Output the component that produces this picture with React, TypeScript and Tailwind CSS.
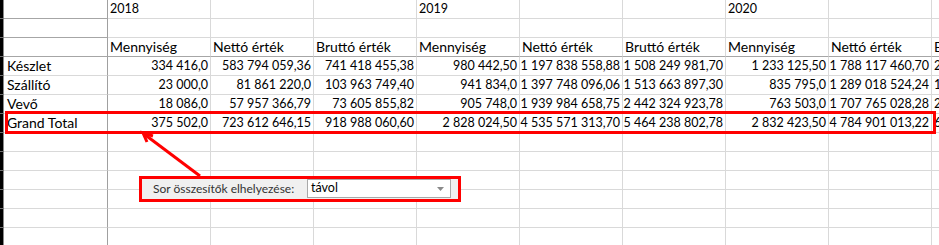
import React from "react";

const cols = 9; // B..J

type Row = { label: string; cells: string[]; kind: "year" | "empty" | "head" | "num" };

const rows: Row[] = [
  { label: "", kind: "year", cells: ["2018", "", "", "2019", "", "", "2020", "", ""] },
  { label: "", kind: "empty", cells: ["", "", "", "", "", "", "", "", ""] },
  {
    label: "",
    kind: "head",
    cells: ["Mennyiség", "Nettó érték", "Bruttó érték", "Mennyiség", "Nettó érték", "Bruttó érték", "Mennyiség", "Nettó érték", "Bruttó érték"],
  },
  {
    label: "Készlet",
    kind: "num",
    cells: ["334 416,0", "583 794 059,36", "741 418 455,38", "980 442,50", "1 197 838 558,88", "1 508 249 981,70", "1 233 125,50", "1 788 117 460,70", "2 312 447 918,26"],
  },
  {
    label: "Szállító",
    kind: "num",
    cells: ["23 000,0", "81 861 220,0", "103 963 749,40", "941 834,0", "1 397 748 096,06", "1 513 663 897,30", "835 795,0", "1 289 018 524,24", "1 637 053 525,78"],
  },
  {
    label: "Vevő",
    kind: "num",
    cells: ["18 086,0", "57 957 366,79", "73 605 855,82", "905 748,0", "1 939 984 658,75", "2 442 324 923,78", "763 503,0", "1 707 765 028,28", "2 168 861 585,92"],
  },
  {
    label: "Grand Total",
    kind: "num",
    cells: ["375 502,0", "723 612 646,15", "918 988 060,60", "2 828 024,50", "4 535 571 313,70", "5 464 238 802,78", "2 832 423,50", "4 784 901 013,22", "6 118 363 029,96"],
  },
];

const emptyRows = 6;

function Cell({ text, kind, bottomDark, lastCol }: { text: string; kind: Row["kind"]; bottomDark?: boolean; lastCol?: boolean }) {
  const right = kind === "num";
  const size = kind === "head" ? "text-[14px] " : "text-[12.5px] ";
  return (
    <div
      className={
        "h-[19px] border-r border-b border-r-[#d9d9d9] overflow-visible whitespace-nowrap leading-[18px] text-black " +
        size +
        (bottomDark ? "border-b-[#a6a6a6] " : "border-b-[#d9d9d9] ") +
        (right && !lastCol ? "text-right pr-[2px] " : "pl-[2px] ")
      }
    >
      {text}
    </div>
  );
}

export default function App() {
  const allRows = [...rows];
  for (let i = 0; i < emptyRows; i++) allRows.push({ label: "", kind: "empty", cells: Array(cols).fill("") });

  return (
    <div className="relative w-[939px] h-[245px] overflow-hidden bg-white" style={{ fontFamily: "Lato, 'Noto Sans', sans-serif" }}>
      <div className="grid grid-cols-[4px_104px_repeat(9,103px)] auto-rows-[19px]">
        {allRows.map((r, ri) => (
          <React.Fragment key={ri}>
            <div className="h-[19px] bg-black border-r border-b border-r-[#8a8a8a] border-b-[#6e6e6e]" />
            <div
              className={
                "h-[19px] border-r border-b border-r-[#a0a0a0] leading-[18px] text-[14px] text-black pl-[3px] whitespace-nowrap " +
                (ri <= 2 ? "border-b-[#a6a6a6]" : "border-b-[#d9d9d9]")
              }
            >
              {r.label}
            </div>
            {r.cells.map((c, ci) => (
              <Cell key={ci} text={c} kind={r.kind} bottomDark={ri === 2} lastCol={ci === cols - 1} />
            ))}
          </React.Fragment>
        ))}
      </div>

      {/* Red highlight around Grand Total row */}
      <div className="absolute left-[5px] top-[111px] w-[931px] h-[23px] border-[3px] border-[#ff0000]" />

      {/* Arrow */}
      <svg className="absolute left-0 top-0" width="939" height="245" viewBox="0 0 939 245">
        <line x1="200" y1="176" x2="144" y2="134" stroke="#ff0000" strokeWidth="3" />
        <polyline points="153,136 143,133 147,142" fill="none" stroke="#ff0000" strokeWidth="3" strokeLinejoin="miter" />
      </svg>

      {/* Settings box */}
      <div className="absolute left-[139px] top-[176px] w-[322px] h-[26px] border-[3px] border-[#ff0000] bg-[#f0f0f0] flex items-stretch">
        <div className="w-[165px] pl-[11px] flex items-center text-[12px] text-[#333333] whitespace-nowrap">
          Sor összesítők elhelyezése:
        </div>
        <div className="w-[144px] h-[19px] bg-white border border-[#a9a9a9] flex items-center justify-between pl-[3px] pr-[6px]">
          <span className="text-[12.5px] text-black">távol</span>
          <svg width="7" height="4" viewBox="0 0 7 4">
            <path d="M0 0 L7 0 L3.5 4 Z" fill="#8a8a8a" />
          </svg>
        </div>
      </div>
    </div>
  );
}
